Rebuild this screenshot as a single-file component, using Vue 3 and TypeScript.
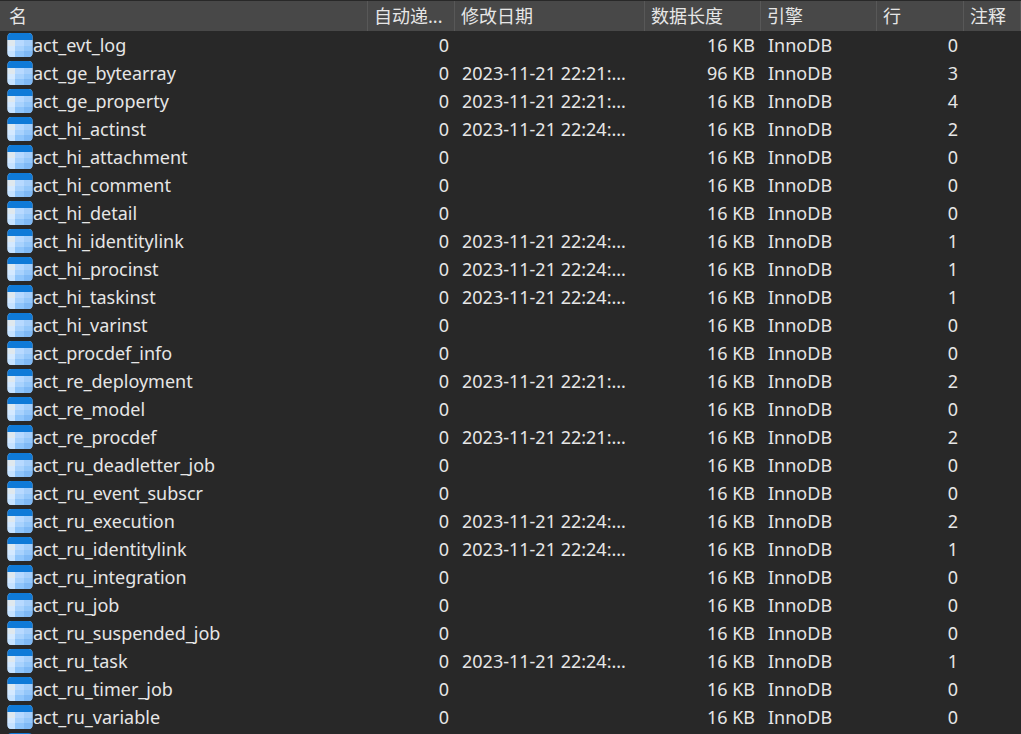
<script setup lang="ts">
interface Row { name: string; date: string; size: number; rows: number }
const d1 = '2023-11-21 22:21:...'
const d4 = '2023-11-21 22:24:...'
const rows: Row[] = [
  { name: 'act_evt_log', date: '', size: 16, rows: 0 },
  { name: 'act_ge_bytearray', date: d1, size: 96, rows: 3 },
  { name: 'act_ge_property', date: d1, size: 16, rows: 4 },
  { name: 'act_hi_actinst', date: d4, size: 16, rows: 2 },
  { name: 'act_hi_attachment', date: '', size: 16, rows: 0 },
  { name: 'act_hi_comment', date: '', size: 16, rows: 0 },
  { name: 'act_hi_detail', date: '', size: 16, rows: 0 },
  { name: 'act_hi_identitylink', date: d4, size: 16, rows: 1 },
  { name: 'act_hi_procinst', date: d4, size: 16, rows: 1 },
  { name: 'act_hi_taskinst', date: d4, size: 16, rows: 1 },
  { name: 'act_hi_varinst', date: '', size: 16, rows: 0 },
  { name: 'act_procdef_info', date: '', size: 16, rows: 0 },
  { name: 'act_re_deployment', date: d1, size: 16, rows: 2 },
  { name: 'act_re_model', date: '', size: 16, rows: 0 },
  { name: 'act_re_procdef', date: d1, size: 16, rows: 2 },
  { name: 'act_ru_deadletter_job', date: '', size: 16, rows: 0 },
  { name: 'act_ru_event_subscr', date: '', size: 16, rows: 0 },
  { name: 'act_ru_execution', date: d4, size: 16, rows: 2 },
  { name: 'act_ru_identitylink', date: d4, size: 16, rows: 1 },
  { name: 'act_ru_integration', date: '', size: 16, rows: 0 },
  { name: 'act_ru_job', date: '', size: 16, rows: 0 },
  { name: 'act_ru_suspended_job', date: '', size: 16, rows: 0 },
  { name: 'act_ru_task', date: d4, size: 16, rows: 1 },
  { name: 'act_ru_timer_job', date: '', size: 16, rows: 0 },
  { name: 'act_ru_variable', date: '', size: 16, rows: 0 },
]
const headers = ['名', '自动递...', '修改日期', '数据长度', '引擎', '行', '注释']
</script>

<template>
  <div class="table">
    <div class="head">
      <div v-for="h in headers" :key="h" class="hcell">{{ h }}</div>
    </div>
    <div class="body">
      <div v-for="r in rows" :key="r.name" class="row">
        <div class="name">
          <svg class="icon" width="26" height="24" viewBox="0 0 26 24" aria-hidden="true">
            <defs>
              <clipPath id="tbl"><rect x="0.5" y="0" width="25" height="24" rx="4" /></clipPath>
            </defs>
            <g clip-path="url(#tbl)">
              <rect width="26" height="24" fill="#bcdcff" />
              <rect width="26" height="7" fill="#0f7ad8" />
              <rect y="7" width="8" height="6" fill="#dfe8ee" />
              <rect x="8" y="7" width="9" height="6" fill="#b7d9ff" />
              <rect x="17" y="7" width="9" height="6" fill="#a6cffb" />
              <rect y="13" width="8" height="5" fill="#d4e9ff" />
              <rect x="8" y="13" width="9" height="5" fill="#a8d2fd" />
              <rect x="17" y="13" width="9" height="5" fill="#94c7fa" />
              <rect y="18" width="8" height="6" fill="#c5e2ff" />
              <rect x="8" y="18" width="9" height="6" fill="#8fc5fb" />
              <rect x="17" y="18" width="9" height="6" fill="#7fb9f5" />
            </g>
          </svg>
          <span>{{ r.name }}</span>
        </div>
        <div class="num">0</div>
        <div class="date">{{ r.date }}</div>
        <div class="num">{{ r.size }} KB</div>
        <div class="engine">InnoDB</div>
        <div class="num">{{ r.rows }}</div>
        <div></div>
      </div>
      <div class="row">
        <div class="name">
          <svg class="icon" width="26" height="24" viewBox="0 0 26 24" aria-hidden="true">
            <rect x="0.5" width="25" height="24" rx="4" fill="#0f7ad8" />
          </svg>
        </div>
      </div>
    </div>
  </div>
</template>

<style>
html, body { margin: 0; background: #282828; overflow: hidden; }
</style>

<style scoped>
.table {
  width: 1021px;
  height: 734px;
  overflow: hidden;
  background: #282828;
  color: #e6e6e6;
  font-family: "Noto Sans", "Noto Sans CJK SC", sans-serif;
  font-size: 18px;
}
.head, .row {
  display: grid;
  grid-template-columns: 368px 87px 190px 116px 116px 87px 57px;
}
.head {
  height: 30px;
  margin-top: 1px;
  background: #484848;
}
.hcell {
  padding-left: 6px;
  border-right: 1px solid #585858;
  line-height: 30px;
  white-space: nowrap;
  overflow: hidden;
  box-sizing: border-box;
}
.hcell:first-child { padding-left: 9px; }
.row {
  height: 28px;
  line-height: 28px;
  white-space: nowrap;
}
.name { display: flex; align-items: center; gap: 0; padding-left: 7px; }
.icon { flex: none; margin-right: 0; }
.num { text-align: right; padding-right: 6px; }
.date, .engine { padding-left: 7px; }
</style>
